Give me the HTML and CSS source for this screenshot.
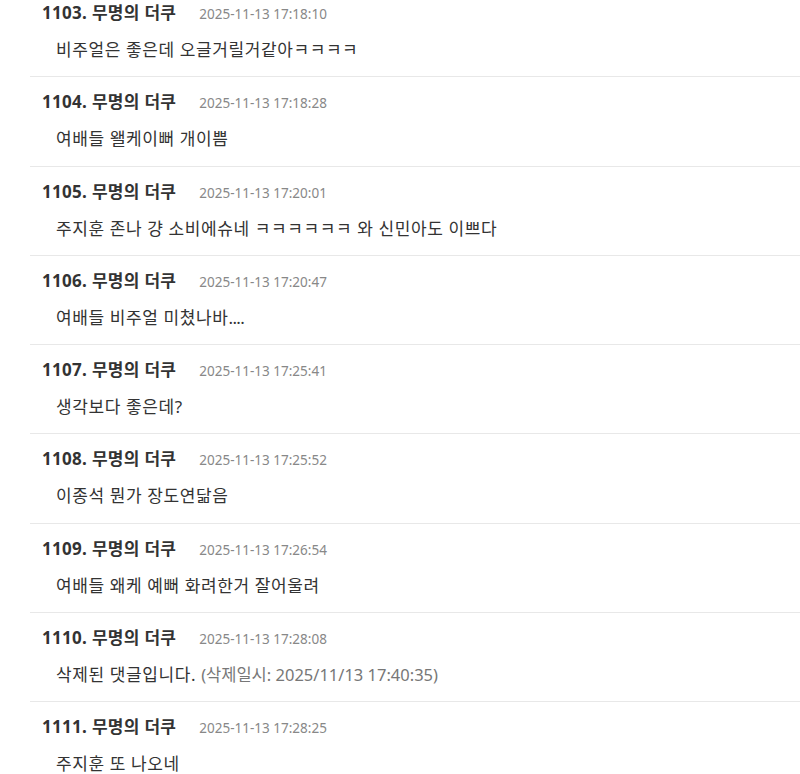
FILE: index.html
```html
<!DOCTYPE html>
<html lang="ko">
<head>
  <meta charset="UTF-8" />
  <meta name="viewport" content="width=device-width, initial-scale=1.0" />
  <title>댓글</title>
  <link rel="stylesheet" href="styles.css">
</head>
<body>

<ul class="comments">
  <li class="comment">
    <div class="comment-head"><strong class="nick">1103. 무명의 더쿠</strong><span class="date">2025-11-13 17:18:10</span></div>
    <div class="comment-body">비주얼은 좋은데 오글거릴거같아ㅋㅋㅋㅋ</div>
  </li>
  <li class="comment">
    <div class="comment-head"><strong class="nick">1104. 무명의 더쿠</strong><span class="date">2025-11-13 17:18:28</span></div>
    <div class="comment-body">여배들 왤케이뻐 개이쁨</div>
  </li>
  <li class="comment">
    <div class="comment-head"><strong class="nick">1105. 무명의 더쿠</strong><span class="date">2025-11-13 17:20:01</span></div>
    <div class="comment-body">주지훈 존나 걍 소비에슈네 ㅋㅋㅋㅋㅋㅋ 와 신민아도 이쁘다</div>
  </li>
  <li class="comment">
    <div class="comment-head"><strong class="nick">1106. 무명의 더쿠</strong><span class="date">2025-11-13 17:20:47</span></div>
    <div class="comment-body">여배들 비주얼 미쳤나바<span class="dots">....</span></div>
  </li>
  <li class="comment">
    <div class="comment-head"><strong class="nick">1107. 무명의 더쿠</strong><span class="date">2025-11-13 17:25:41</span></div>
    <div class="comment-body">생각보다 좋은데?</div>
  </li>
  <li class="comment">
    <div class="comment-head"><strong class="nick">1108. 무명의 더쿠</strong><span class="date">2025-11-13 17:25:52</span></div>
    <div class="comment-body">이종석 뭔가 장도연닮음</div>
  </li>
  <li class="comment">
    <div class="comment-head"><strong class="nick">1109. 무명의 더쿠</strong><span class="date">2025-11-13 17:26:54</span></div>
    <div class="comment-body">여배들 왜케 예뻐 화려한거 잘어울려</div>
  </li>
  <li class="comment">
    <div class="comment-head"><strong class="nick">1110. 무명의 더쿠</strong><span class="date">2025-11-13 17:28:08</span></div>
    <div class="comment-body">삭제된 댓글입니다. <span class="deleted">(삭제일시: 2025/11/13 17:40:35)</span></div>
  </li>
  <li class="comment">
    <div class="comment-head"><strong class="nick">1111. 무명의 더쿠</strong><span class="date">2025-11-13 17:28:25</span></div>
    <div class="comment-body">주지훈 또 나오네</div>
  </li>
</ul>

</body>
</html>
```

FILE: styles.css
```css
body {
  margin: 0;
  background: #fff;
  color: #333;
  font-family: "Noto Sans", "Noto Sans CJK KR", sans-serif;
}
.comments {
  list-style: none;
  margin: -12px 0 0 30px;
  padding: 0;
}
.comment {
  padding: 13px 0 14.25px 12px;
  border-bottom: 1px solid #e8e8e8;
}
.comment-head {
  display: flex;
  align-items: baseline;
  gap: 23px;
  height: 24px;
  line-height: 24px;
}
.nick {
  font-size: 17px;
  font-weight: bold;
  letter-spacing: 0.3px;
  color: #333;
}
.date {
  font-size: 13.5px;
  color: #888;
}
.comment-body {
  margin-top: 13px;
  padding-left: 14px;
  font-size: 17px;
  line-height: 24px;
  letter-spacing: 0.6px;
  color: #333;
}
.dots {
  letter-spacing: -0.6px;
}
.deleted {
  font-size: 16.5px;
  letter-spacing: 0;
  color: #777;
}
```
